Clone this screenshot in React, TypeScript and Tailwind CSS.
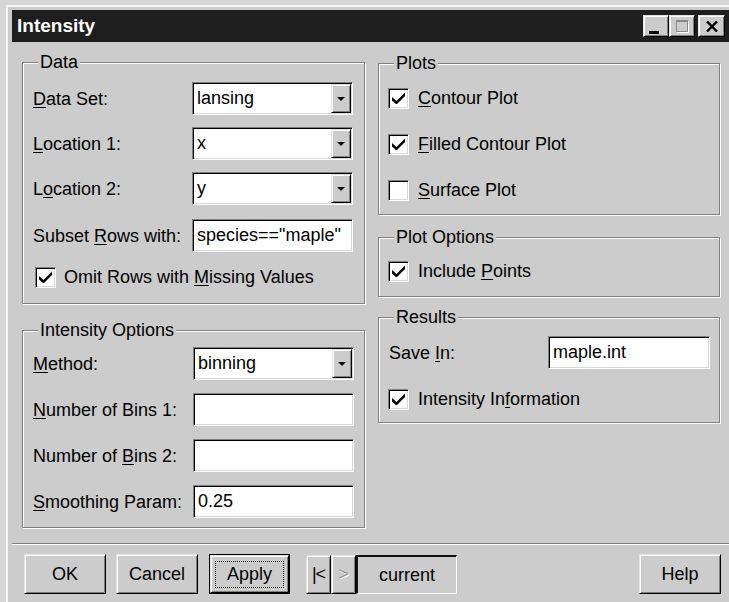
import type { ReactNode } from 'react';

// 3D edge styles for the classic dialog controls
const raised =
    'border border-t-[#e4e4e4] border-l-[#e4e4e4] border-r-black border-b-black shadow-[inset_1px_1px_0_#fff,inset_-1px_-1px_0_#808080]';
const sunken =
    'border border-t-[#808080] border-l-[#808080] border-r-white border-b-white shadow-[inset_1px_1px_0_#000,inset_-1px_-1px_0_#d8d8d8]';

// label with an underlined access key
function Acc({ text, at }: { text: string; at: number }) {
    return (
        <span>
            {text.slice(0, at)}
            <u className="underline-offset-2">{text[at]}</u>
            {text.slice(at + 1)}
        </span>
    );
}

function GroupBox({ title, className, children }: { title: string; className: string; children: ReactNode }) {
    return (
        <div className={`relative border border-[#808080] shadow-[inset_1px_1px_0_#fff,1px_1px_0_#fff] ${className}`}>
            <span className="absolute left-[15px] top-[-12px] bg-[#cccccc] px-[2px] leading-[22px]">{title}</span>
            {children}
        </div>
    );
}

function Combo({ value }: { value: string }) {
    return (
        <div className={`flex h-[33px] w-[161px] bg-white p-[1px] ${sunken}`}>
            <span className="flex-1 pl-[3px] leading-[29px]">{value}</span>
            <span className={`flex w-[20px] items-center justify-center bg-[#cccccc] ${raised}`}>
                <span className="h-0 w-0 border-x-[4px] border-t-[4px] border-x-transparent border-t-black" />
            </span>
        </div>
    );
}

function Field({ value, w = 'w-[161px]' }: { value?: string; w?: string }) {
    return <div className={`h-[33px] ${w} bg-white pl-[4px] leading-[31px] ${sunken}`}>{value}</div>;
}

function Check({ checked }: { checked: boolean }) {
    return (
        <span className={`flex h-[21px] w-[21px] shrink-0 items-center justify-center bg-white ${sunken}`}>
            {checked && (
                <svg width="13" height="12" viewBox="0 0 13 12">
                    <polygon points="0,5 4.5,9 13,0.5 13,4 4.5,12.5 0,8.5" fill="#000" />
                </svg>
            )}
        </span>
    );
}

function Row({ label, children }: { label: ReactNode; children: ReactNode }) {
    return (
        <div className="flex h-[33px] items-center justify-between">
            <span>{label}</span>
            {children}
        </div>
    );
}

function CheckRow({ checked, label, gap = 'gap-[9px]' }: { checked: boolean; label: ReactNode; gap?: string }) {
    return (
        <div className={`flex h-[22px] items-center ${gap}`}>
            <Check checked={checked} />
            <span>{label}</span>
        </div>
    );
}

function PushButton({ children, w }: { children: ReactNode; w: string }) {
    return (
        <button className={`flex h-[40px] ${w} items-center justify-center bg-[#cccccc] ${raised}`}>{children}</button>
    );
}

export default function App() {
    return (
        <div className="h-[602px] w-[729px] overflow-hidden bg-[#d6d6d6] pl-[6px] pt-[5px] font-['Liberation_Sans',Arial,sans-serif] text-[18px] leading-[22px] text-black">
            <div className="h-full border-l-2 border-t-2 border-[#f4f4f4] bg-[#cccccc] pl-[4px] pt-[3px]">
                {/* title bar */}
                <div className="flex h-[32px] items-center bg-[#1e1e1e] pl-[5px] pr-[4px]">
                    <span className="text-[19px] font-bold text-white">Intensity</span>
                    <div className="ml-auto flex items-center">
                        <span className={`flex h-[22px] w-[26px] items-end bg-[#cccccc] pb-[2px] pl-[5px] ${raised}`}>
                            <span className="h-[3px] w-[10px] bg-black" />
                        </span>
                        <span className={`flex h-[22px] w-[26px] items-center justify-center bg-[#cccccc] ${raised}`}>
                            <span className="h-[12px] w-[12px] border border-t-2 border-[#8a8a8a] shadow-[1px_1px_0_#fff]" />
                        </span>
                        <span className={`ml-[3px] flex h-[22px] w-[27px] items-center justify-center bg-[#cccccc] ${raised}`}>
                            <svg width="12" height="11" viewBox="0 0 12 11">
                                <path d="M1 0.5 L11 10.5 M11 0.5 L1 10.5" stroke="#000" strokeWidth="2.4" />
                            </svg>
                        </span>
                    </div>
                </div>

                {/* dialog body */}
                <div className="flex items-start gap-[13px] pl-[10px] pt-[20px]">
                    <div className="flex w-[343px] flex-col gap-[26px]">
                        <GroupBox title="Data" className="h-[242px] pl-[10px] pr-[11px] pt-[19px]">
                            <div className="flex flex-col gap-[12px]">
                                <Row label={<Acc text="Data Set:" at={0} />}>
                                    <Combo value="lansing" />
                                </Row>
                                <Row label={<Acc text="Location 1:" at={0} />}>
                                    <Combo value="x" />
                                </Row>
                                <Row label={<Acc text="Location 2:" at={1} />}>
                                    <Combo value="y" />
                                </Row>
                                <div className="mt-[2px]">
                                    <Row label={<Acc text="Subset Rows with:" at={7} />}>
                                        <Field value={'species=="maple"'} />
                                    </Row>
                                </div>
                                <div className="ml-[2px] mt-[2px]">
                                    <CheckRow checked gap="gap-[8px]" label={<Acc text="Omit Rows with Missing Values" at={15} />} />
                                </div>
                            </div>
                        </GroupBox>

                        <GroupBox title="Intensity Options" className="h-[198px] pl-[10px] pr-[10px] pt-[16px]">
                            <div className="flex flex-col gap-[13px]">
                                <Row label={<Acc text="Method:" at={0} />}>
                                    <Combo value="binning" />
                                </Row>
                                <Row label={<Acc text="Number of Bins 1:" at={0} />}>
                                    <Field />
                                </Row>
                                <Row label={<Acc text="Number of Bins 2:" at={10} />}>
                                    <Field />
                                </Row>
                                <Row label={<Acc text="Smoothing Param:" at={0} />}>
                                    <Field value="0.25" />
                                </Row>
                            </div>
                        </GroupBox>
                    </div>

                    <div className="mt-[1px] flex w-[342px] flex-col">
                        <GroupBox title="Plots" className="h-[152px] pl-[9px] pt-[23px]">
                            <div className="flex flex-col gap-[24px]">
                                <CheckRow checked label={<Acc text="Contour Plot" at={0} />} />
                                <CheckRow checked label={<Acc text="Filled Contour Plot" at={0} />} />
                                <CheckRow checked={false} label={<Acc text="Surface Plot" at={0} />} />
                            </div>
                        </GroupBox>

                        <GroupBox title="Plot Options" className="mt-[22px] h-[60px] pl-[9px] pt-[22px]">
                            <CheckRow checked label={<Acc text="Include Points" at={8} />} />
                        </GroupBox>

                        <GroupBox title="Results" className="mt-[20px] h-[106px] pl-[10px] pr-[9px] pt-[18px]">
                            <Row label={<Acc text="Save In:" at={5} />}>
                                <Field value="maple.int" w="w-[162px]" />
                            </Row>
                            <div className="ml-[-1px] mt-[19px]">
                                <CheckRow checked label={<Acc text="Intensity Information" at={12} />} />
                            </div>
                        </GroupBox>
                    </div>
                </div>

                {/* separator */}
                <div className="mt-[15px] h-[2px] border-t border-b border-t-[#808080] border-b-white" />

                {/* button row */}
                <div className="flex items-center pl-[12px] pr-[8px] pt-[9px]">
                    <PushButton w="w-[82px]">OK</PushButton>
                    <div className="ml-[10px]">
                        <PushButton w="w-[82px]">Cancel</PushButton>
                    </div>
                    <div className="ml-[11px] h-[40px] w-[81px] border border-black">
                        <div className={`flex h-full items-center justify-center bg-[#cccccc] ${raised}`}>
                            <span className="flex h-[27px] w-[69px] items-center justify-center border border-dotted border-black">
                                Apply
                            </span>
                        </div>
                    </div>
                    <div className="ml-[16px] flex h-[39px] items-stretch">
                        <span className={`flex w-[25px] items-center justify-center bg-[#cccccc] tracking-[-1px] ${raised}`}>
                            |&lt;
                        </span>
                        <span className={`flex w-[25px] items-center justify-center bg-[#cccccc] text-[#9a9a9a] [text-shadow:1px_1px_0_#fff] ${raised}`}>
                            &gt;
                        </span>
                        <span className="flex w-[101px] items-center justify-center border-b border-l-2 border-r border-t-2 border-b-white border-l-[#111] border-r-white border-t-[#111] bg-[#cccccc]">
                            current
                        </span>
                    </div>
                    <div className="ml-auto">
                        <PushButton w="w-[82px]">Help</PushButton>
                    </div>
                </div>
            </div>
        </div>
    );
}
